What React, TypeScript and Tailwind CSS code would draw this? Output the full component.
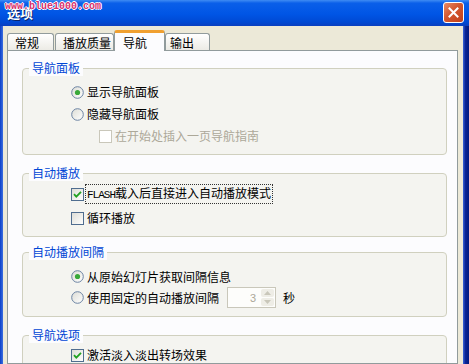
import React from "react";

const CJK = "font-['Noto_Sans_CJK_SC','Noto_Sans',sans-serif]";

function Radio({ checked }: { checked?: boolean }) {
  return (
    <svg width="13" height="13" viewBox="0 0 13 13" className="shrink-0">
      <defs>
        <linearGradient id="rg" x1="0" y1="0" x2="1" y2="1">
          <stop offset="0" stopColor="#dcdcd5" />
          <stop offset="1" stopColor="#ffffff" />
        </linearGradient>
      </defs>
      <circle cx="6.5" cy="6.5" r="5.8" fill="url(#rg)" stroke="#6b83a3" strokeWidth="1" />
      {checked && <circle cx="6.5" cy="6.5" r="2.6" fill="#39a93a" />}
    </svg>
  );
}

function Check({ checked, disabled }: { checked?: boolean; disabled?: boolean }) {
  return (
    <svg width="13" height="13" viewBox="0 0 13 13" className="shrink-0">
      <defs>
        <linearGradient id="cg" x1="0" y1="0" x2="1" y2="1">
          <stop offset="0" stopColor="#dcdcd5" />
          <stop offset="1" stopColor="#ffffff" />
        </linearGradient>
      </defs>
      <rect
        x="0.5"
        y="0.5"
        width="12"
        height="12"
        fill={disabled ? "#ffffff" : "url(#cg)"}
        stroke={disabled ? "#c9c7ba" : "#4f6d8f"}
      />
      {checked && (
        <path d="M3 6.2 L5.3 8.6 L10 3.8" fill="none" stroke="#21a121" strokeWidth="1.8" />
      )}
    </svg>
  );
}

function Group({
  label,
  mt,
  pt,
  pb,
  children,
}: {
  label: string;
  mt: string;
  pt: string;
  pb: string;
  children: React.ReactNode;
}) {
  return (
    <div className={`relative ${mt} ${pt} ${pb} rounded-[4px] border border-[#d0d0bf] bg-[#f4f4f0] pl-[48px] flex flex-col`}>
      <span
        className={`absolute -top-[9px] left-[6px] bg-[#fcfcfe] px-[3px] text-[12px] leading-[16px] text-[#0046d5] ${CJK}`}
      >
        {label}
      </span>
      {children}
    </div>
  );
}

function Row({ h, children, indent }: { h: string; children: React.ReactNode; indent?: boolean }) {
  return (
    <div className={`flex items-center ${h} ${indent ? "pl-[28px]" : ""} text-[12px] leading-[14px] text-black ${CJK}`}>
      {children}
    </div>
  );
}

export default function App() {
  return (
    <div className="w-[469px] h-[364px] overflow-hidden flex flex-col bg-[#ece9d8] select-none">
      {/* Title bar */}
      <div className="relative h-[26px] shrink-0 bg-[linear-gradient(to_bottom,#3f8cf3_0%,#0a5fe9_12%,#0055e5_55%,#0049d3_85%,#0a3fbf_100%)]">
        <span className={`absolute left-[7px] top-[5px] text-[13px] font-bold leading-[16px] text-white [text-shadow:1px_1px_0_#0a246a] ${CJK}`}>
          选项
        </span>
        <span className="absolute left-[5px] top-[1px] font-['Liberation_Mono',monospace] text-[10px] font-bold leading-[12px] text-[#d9306c] [text-shadow:1px_0_0_#fff,-1px_0_0_#fff,0_1px_0_#fff,0_-1px_0_#fff]">
          www.blue1000.com
        </span>
        <div className="absolute left-[443px] top-[2px] w-[21px] h-[21px] rounded-[3px] border border-white bg-[linear-gradient(135deg,#e98a66_0%,#d4572f_45%,#c0401c_100%)] flex items-center justify-center">
          <svg width="11" height="11" viewBox="0 0 11 11">
            <path d="M1.5 1.5 L9.5 9.5 M9.5 1.5 L1.5 9.5" stroke="#fff" strokeWidth="2" strokeLinecap="square" />
          </svg>
        </div>
      </div>

      {/* Body */}
      <div className="flex flex-1 min-h-0">
        <div className="w-[3px] shrink-0 bg-[linear-gradient(to_right,#0a3fc8,#3d6fe0)]" />
        <div className="flex-1 min-w-0 pt-[4px] pl-[4px] pr-[5px] flex flex-col">
          {/* Tabs */}
          <div className={`relative z-10 flex items-end h-[21px] -mb-px text-[12px] leading-[14px] text-black ${CJK}`}>
            <div className="mb-px w-[47px] h-[17px] pl-[7px] pt-[2px] rounded-t-[3px] border border-b-0 border-[#919b9c] bg-[linear-gradient(to_bottom,#ffffff,#ecebe5)]">
              常规
            </div>
            <div className="mb-px ml-px w-[59px] h-[17px] pl-[7px] pt-[2px] rounded-t-[3px] border border-b-0 border-[#919b9c] bg-[linear-gradient(to_bottom,#ffffff,#ecebe5)]">
              播放质量
            </div>
            <div className="w-[51px] h-[21px] pl-[8px] pt-[3px] rounded-t-[3px] border border-b-0 border-[#919b9c] border-t-[3px] border-t-[#f0a030] bg-[#fcfcfe]">
              导航
            </div>
            <div className="mb-px w-[45px] h-[17px] pl-[4px] pt-[2px] rounded-t-[3px] border border-b-0 border-[#919b9c] bg-[linear-gradient(to_bottom,#ffffff,#ecebe5)]">
              输出
            </div>
          </div>

          {/* Panel */}
          <div className="flex-1 min-h-0 overflow-hidden border border-[#919b9c] bg-[#fcfcfe] pl-[14px] pr-[10px] flex flex-col">
            <Group label="导航面板" mt="mt-[17px]" pt="pt-[12px]" pb="pb-[7px]">
              <Row h="h-[22px]">
                <Radio checked />
                <span className="ml-[3px]">显示导航面板</span>
              </Row>
              <Row h="h-[22px]">
                <Radio />
                <span className="ml-[3px]">隐藏导航面板</span>
              </Row>
              <Row h="h-[22px]" indent>
                <Check disabled />
                <span className="ml-[3px] text-[#aca899]">在开始处插入一页导航指南</span>
              </Row>
            </Group>

            <Group label="自动播放" mt="mt-[18px]" pt="pt-[8px]" pb="pb-[6px]">
              <Row h="h-[24px]">
                <Check checked />
                <span className="ml-[1px] px-px py-px border border-dotted border-[#333]">
                  <span className="font-['Liberation_Mono',monospace] text-[11px] tracking-[-1px]">FLASH</span>
                  载入后直接进入自动播放模式
                </span>
              </Row>
              <Row h="h-[24px]">
                <Check />
                <span className="ml-[3px]">循环播放</span>
              </Row>
            </Group>

            <Group label="自动播放间隔" mt="mt-[15px]" pt="pt-[13px]" pb="pb-[8px]">
              <Row h="h-[21px]">
                <Radio checked />
                <span className="ml-[3px]">从原始幻灯片获取间隔信息</span>
              </Row>
              <Row h="h-[21px]">
                <Radio />
                <span className="ml-[3px]">使用固定的自动播放间隔</span>
                <div className="ml-[8px] w-[49px] h-[21px] border border-[#c9c7ba] bg-[#fdfdfb] flex items-center">
                  <span className="flex-1 text-right pr-[4px] font-['Liberation_Sans',sans-serif] text-[11px] text-[#aca899]">
                    3
                  </span>
                  <div className="w-[15px] h-full flex flex-col gap-px p-px">
                    <div className="flex-1 rounded-[2px] bg-[#eeede6] flex items-center justify-center">
                      <svg width="7" height="4" viewBox="0 0 7 4"><path d="M0 4 L3.5 0 L7 4Z" fill="#c9c7ba" /></svg>
                    </div>
                    <div className="flex-1 rounded-[2px] bg-[#eeede6] flex items-center justify-center">
                      <svg width="7" height="4" viewBox="0 0 7 4"><path d="M0 0 L3.5 4 L7 0Z" fill="#c9c7ba" /></svg>
                    </div>
                  </div>
                </div>
                <span className="ml-[7px]">秒</span>
              </Row>
            </Group>

            <Group label="导航选项" mt="mt-[18px]" pt="pt-[8px]" pb="pb-[8px]">
              <Row h="h-[22px]">
                <Check checked />
                <span className="ml-[3px]">激活淡入淡出转场效果</span>
              </Row>
            </Group>
          </div>
        </div>
        <div className="w-[6px] shrink-0 bg-[linear-gradient(to_right,#3a64d8,#0a2596_40%,#001a80)]" />
      </div>
    </div>
  );
}
